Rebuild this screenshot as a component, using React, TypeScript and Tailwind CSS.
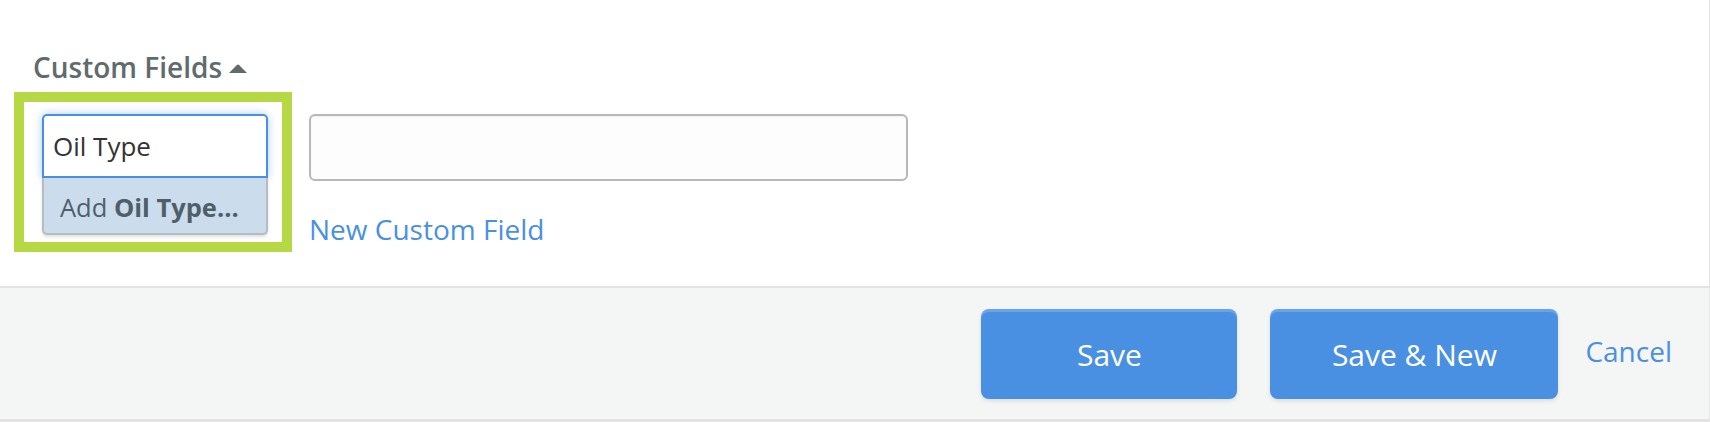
import React from 'react';

const font = { fontFamily: '"Open Sans", "Liberation Sans", sans-serif' };

function FieldNameInput() {
  return (
    <div className="border-[10px] border-[#b6d845] bg-white pt-[12px] pr-[14px] pb-[7px] pl-[18px]">
      <div className="flex h-[64px] w-[226px] items-center rounded-t-[5px] border-2 border-[#4a90e2] bg-white pl-[9px] shadow-[0_0_8px_rgba(74,144,226,0.45)]">
        <span className="text-[26px] leading-[34px] text-[#333333]">Oil Type</span>
      </div>
      <div className="flex h-[57px] w-[226px] items-center rounded-b-[5px] border-x-2 border-b-2 border-[#b9bcbf] bg-[#cbdcec] pt-[2px] pl-[16px] shadow-[0_2px_3px_rgba(0,0,0,0.12)]">
        <span className="text-[25.5px] leading-[34px] text-[#4f5f6a]">
          Add <span className="font-bold">Oil Type...</span>
        </span>
      </div>
    </div>
  );
}

export default function App() {
  return (
    <div
      className="flex h-[422px] w-[1710px] flex-col border-r border-[#e4e4e4] bg-white"
      style={font}
    >
      <div className="h-[286px] pt-[48px] pl-[14px]">
        <div className="flex items-center pl-[19px]">
          <span className="font-semibold text-[28px] leading-[38px] text-[#5f6b6d]">
            Custom Fields
          </span>
          <svg className="mt-[2px] ml-[6px]" width="20" height="9" viewBox="0 0 20 9">
            <path d="M1 9 L8.7 1.2 Q10 0 11.3 1.2 L19 9 Z" fill="#5f6b6d" />
          </svg>
        </div>
        <div className="mt-[6px] flex">
          <FieldNameInput />
          <div className="ml-[17px] pt-[22px]">
            <div className="h-[67px] w-[599px] rounded-[6px] border-2 border-[#b8b8b8] bg-[#fdfdfd] shadow-[inset_0_1px_2px_rgba(0,0,0,0.06)]" />
            <a className="mt-[29px] block text-[28px] leading-[38px] text-[#4a90e2]" href="#">
              New Custom Field
            </a>
          </div>
        </div>
      </div>
      <div className="flex flex-1 items-start justify-end gap-[33px] border-t-2 border-b-[3px] border-[#e3e3e3] bg-[#f4f5f5] pt-[21px] pr-[37px]">
        <button className="h-[90px] w-[256px] rounded-[8px] bg-[#4a90e2] text-[30px] leading-[41px] text-white shadow-[inset_0_3px_0_rgba(255,255,255,0.18),0_2px_4px_rgba(0,0,0,0.1)]">
          Save
        </button>
        <button className="h-[90px] w-[288px] rounded-[8px] bg-[#4a90e2] text-[30px] leading-[41px] text-white shadow-[inset_0_3px_0_rgba(255,255,255,0.18),0_2px_4px_rgba(0,0,0,0.1)]">
          Save &amp; New
        </button>
        <a className="-ml-[6px] mt-[23px] text-[28px] leading-[38px] text-[#4a90e2]" href="#">
          Cancel
        </a>
      </div>
    </div>
  );
}
